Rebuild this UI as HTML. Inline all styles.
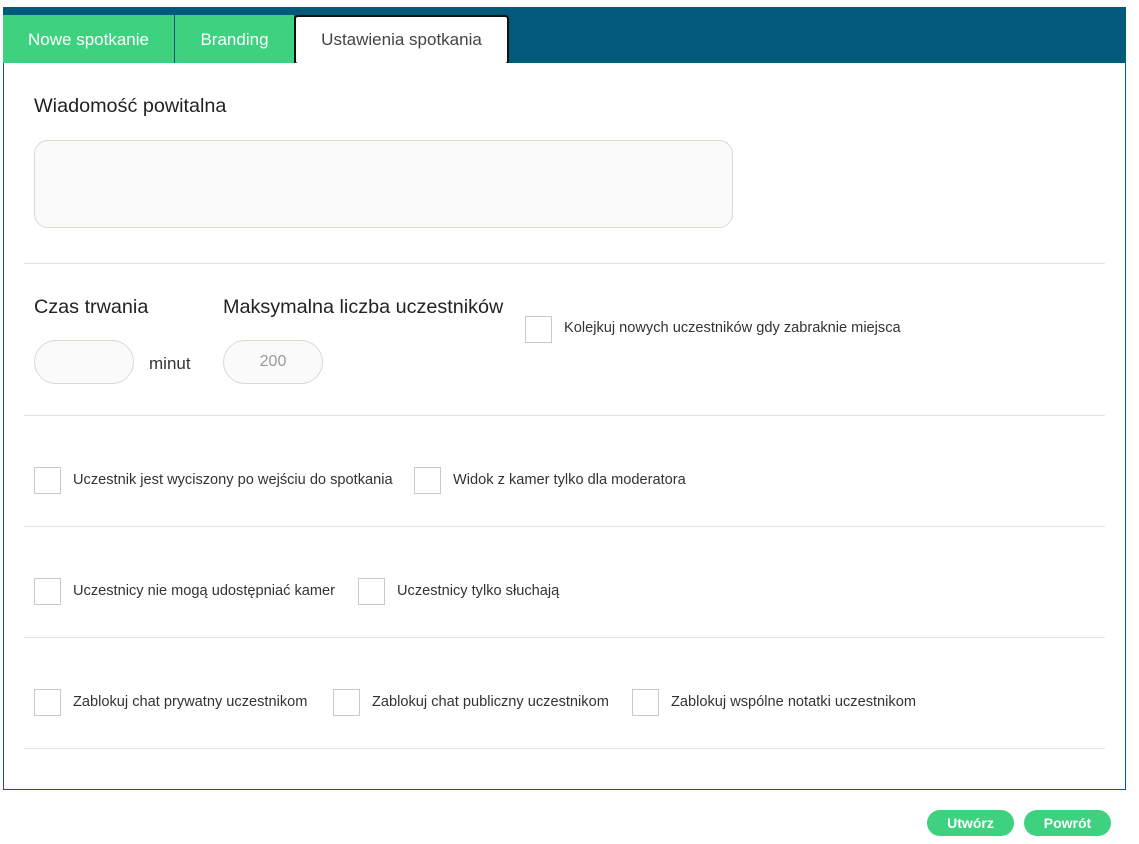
<!DOCTYPE html>
<html><head><meta charset="utf-8"><style>
*{margin:0;padding:0;box-sizing:border-box}
body{width:1139px;height:844px;background:#fff;font-family:"Liberation Sans",sans-serif;color:#333;position:relative;overflow:hidden}
.a{position:absolute}
.bar{left:3px;top:7px;width:1123px;height:57px;background:#015a7a}
.tab{top:15px;height:49px;background:#3dd180;color:#fff;font-size:17px;display:flex;align-items:center;justify-content:center}
.panel{left:3px;top:63px;width:1123px;height:727px;border:1px solid #015a7a;border-top:none;background:#fff}
.hr{left:24px;width:1081px;height:1px;background:#e3e3e3}
.h{font-size:19.8px;color:#222}
.inp{background:#f9faf9;border:1px solid #ddd8cc}
.cb{width:27px;height:27px;border:1px solid #c9c9c9;background:#fff}
.lb{font-size:14.6px;color:#333}
.btn{top:810px;height:26px;border-radius:13px;background:#3dd180;color:#fff;font-weight:bold;font-size:14px;display:flex;align-items:center;justify-content:center}
</style></head><body>
<div class="a bar"></div>
<div class="a tab" style="left:3px;width:171px">Nowe spotkanie</div>
<div class="a" style="left:174px;top:15px;width:1px;height:49px;background:#015a7a"></div>
<div class="a tab" style="left:175px;width:119px">Branding</div>
<div class="a tab" style="left:294px;width:215px;height:50px;background:#fff;color:#444;border:2px solid #111;border-radius:4px">Ustawienia spotkania</div>
<div class="a panel"></div>
<div class="a h" style="left:34px;top:95px">Wiadomość powitalna</div>
<div class="a inp" style="left:34px;top:140px;width:699px;height:88px;border-radius:14px"></div>
<div class="a hr" style="top:263px"></div>
<div class="a h" style="left:34px;top:296px">Czas trwania</div>
<div class="a h" style="left:223px;top:296px">Maksymalna liczba uczestników</div>
<div class="a inp" style="left:34px;top:340px;width:100px;height:44px;border-radius:22px"></div>
<div class="a" style="left:149px;top:354px;font-size:17px">minut</div>
<div class="a inp" style="left:223px;top:340px;width:100px;height:44px;border-radius:22px;color:#999;font-size:16px;display:flex;align-items:center;justify-content:center">200</div>
<div class="a cb" style="left:525px;top:316px"></div>
<div class="a lb" style="left:564px;top:320px">Kolejkuj nowych uczestników gdy zabraknie miejsca</div>
<div class="a hr" style="top:415px"></div>
<div class="a cb" style="left:34px;top:467px"></div>
<div class="a lb" style="left:73px;top:472px">Uczestnik jest wyciszony po wejściu do spotkania</div>
<div class="a cb" style="left:414px;top:467px"></div>
<div class="a lb" style="left:453px;top:472px">Widok z kamer tylko dla moderatora</div>
<div class="a hr" style="top:526px"></div>
<div class="a cb" style="left:34px;top:578px"></div>
<div class="a lb" style="left:73px;top:583px">Uczestnicy nie mogą udostępniać kamer</div>
<div class="a cb" style="left:358px;top:578px"></div>
<div class="a lb" style="left:397px;top:583px">Uczestnicy tylko słuchają</div>
<div class="a hr" style="top:637px"></div>
<div class="a cb" style="left:34px;top:689px"></div>
<div class="a lb" style="left:73px;top:694px">Zablokuj chat prywatny uczestnikom</div>
<div class="a cb" style="left:333px;top:689px"></div>
<div class="a lb" style="left:372px;top:694px">Zablokuj chat publiczny uczestnikom</div>
<div class="a cb" style="left:632px;top:689px"></div>
<div class="a lb" style="left:671px;top:694px">Zablokuj wspólne notatki uczestnikom</div>
<div class="a hr" style="top:748px"></div>
<div class="a btn" style="left:927px;width:87px">Utwórz</div>
<div class="a btn" style="left:1024px;width:87px">Powrót</div>
</body></html>
